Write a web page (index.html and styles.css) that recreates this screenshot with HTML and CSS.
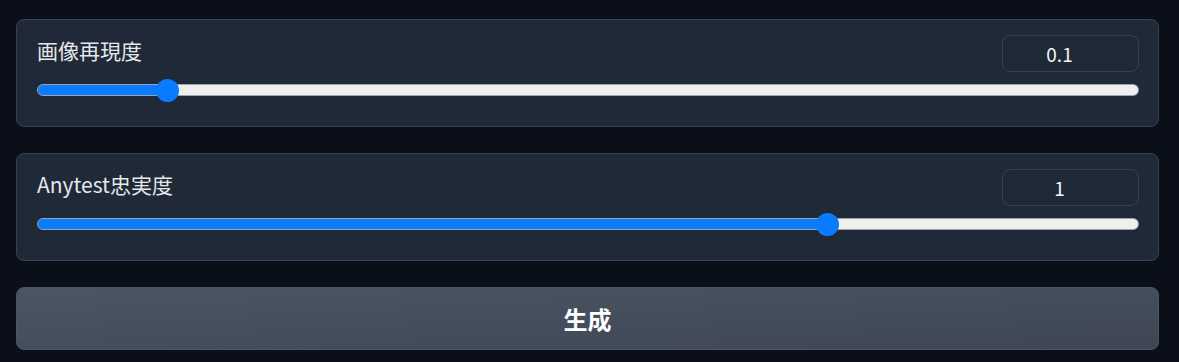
FILE: index.html
```html
<!DOCTYPE html>
<html lang="ja">
<head>
  <meta charset="UTF-8">
  <meta name="viewport" content="width=device-width, initial-scale=1.0">
  <title>生成設定</title>
  <link rel="stylesheet" href="styles.css">
</head>
<body>
  <div class="block">
    <div class="head">
      <span class="label">画像再現度</span>
      <input class="num" type="number" value="0.1" step="0.01">
    </div>
    <input class="slider" type="range" min="0" max="1" step="any" value="0.11" style="--fill: 11%">
  </div>

  <div class="block">
    <div class="head">
      <span class="label">Anytest忠実度</span>
      <input class="num" type="number" value="1" step="0.01">
    </div>
    <input class="slider" type="range" min="0" max="1" step="any" value="0.722" style="--fill: 72.2%">
  </div>

  <button class="btn">生成</button>
</body>
</html>
```

FILE: styles.css
```css
body {
  margin: 0;
  padding: 19px 20px 0 16px;
  background: #0b0f19;
  color: #e5e7eb;
  font-family: "Noto Sans CJK JP", "Noto Sans", sans-serif;
}

.block {
  box-sizing: border-box;
  height: 108px;
  background: #1f2937;
  border: 1px solid #374151;
  border-radius: 8px;
  padding: 15px 19px 0 20px;
  margin-bottom: 26px;
}

.head {
  display: flex;
  justify-content: space-between;
  align-items: flex-start;
}

.label {
  font-size: 21px;
  line-height: 30px;
  color: #e5e7eb;
}

.num {
  width: 137px;
  height: 37px;
  box-sizing: border-box;
  padding: 0 22px 0 0;
  background: #1f2937;
  border: 1px solid #374151;
  border-radius: 8px;
  color: #f3f4f6;
  font-family: inherit;
  font-size: 19px;
  text-align: center;
  -moz-appearance: textfield;
}

.num::-webkit-outer-spin-button,
.num::-webkit-inner-spin-button {
  -webkit-appearance: none;
  margin: 0;
}

.slider {
  -webkit-appearance: none;
  appearance: none;
  display: block;
  width: 100%;
  height: 12px;
  margin: 12px 0 0;
  border-radius: 6px;
  border: 1px solid #9ca3af;
  box-sizing: border-box;
  background: linear-gradient(to right, #0a7bff var(--fill), #efefef var(--fill));
}

.slider::-webkit-slider-thumb {
  -webkit-appearance: none;
  width: 23px;
  height: 23px;
  border-radius: 50%;
  background: #0a7bff;
  border: none;
}

.btn {
  display: block;
  width: 100%;
  height: 63px;
  border: 1px solid #4b5563;
  border-radius: 8px;
  background: linear-gradient(to bottom right, #4b5563, #3e4654);
  color: #fff;
  font-family: inherit;
  font-size: 24px;
  font-weight: bold;
  cursor: pointer;
}
```
